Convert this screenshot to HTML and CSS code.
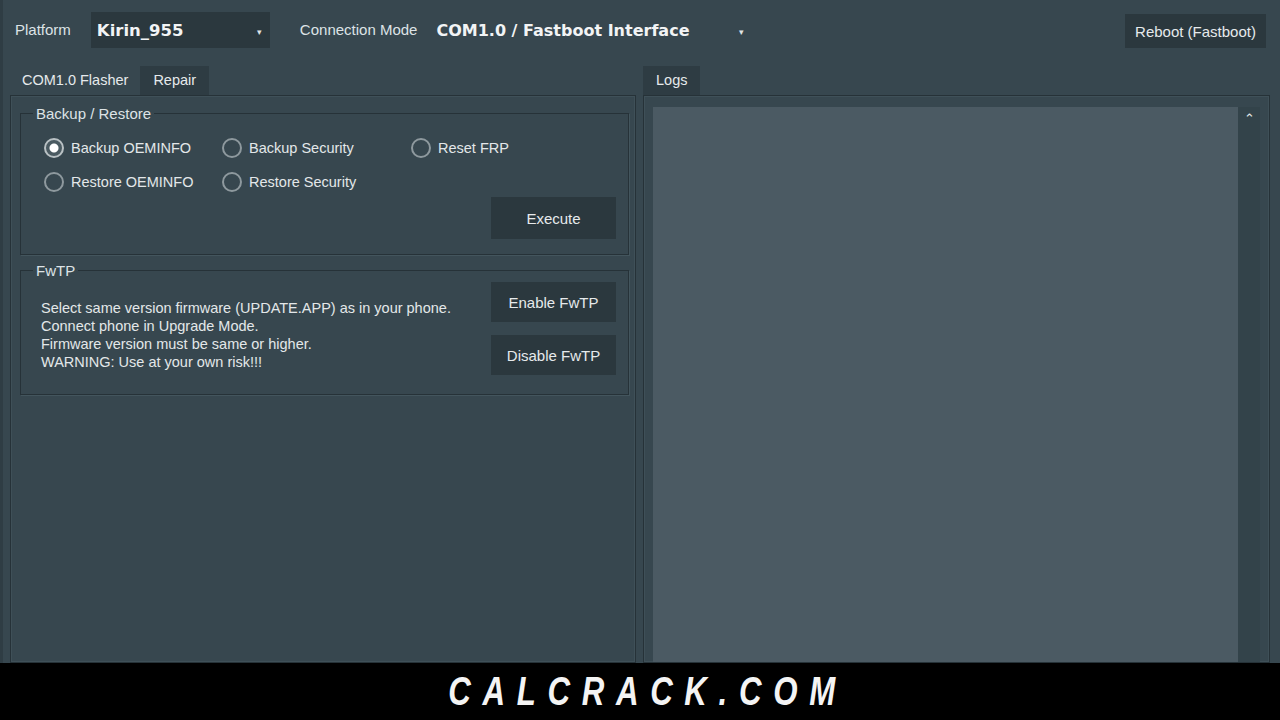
FILE: index.html
```html
<!DOCTYPE html>
<html lang="en">
  <head>
    <meta charset="UTF-8" />
    <meta name="viewport" content="width=device-width, initial-scale=1.0" />
    <title>Repair Tool</title>
    <link rel="stylesheet" href="styles.css">
  </head>
  <body>
    <div class="app">
      <div class="toolbar">
        <span class="label">Platform</span>
        <div class="combo combo-platform">
          <span class="combo-value">Kirin_955</span>
          <span class="caret">&#9662;</span>
        </div>
        <span class="label label-mode">Connection Mode</span>
        <div class="combo combo-mode">
          <span class="combo-value">COM1.0 / Fastboot Interface</span>
          <span class="caret">&#9662;</span>
        </div>
        <button class="btn btn-reboot">Reboot (Fastboot)</button>
      </div>

      <div class="main">
        <!-- left side: flasher / repair tabs -->
        <div class="side">
          <div class="tabs">
            <div class="tab">COM1.0 Flasher</div>
            <div class="tab active">Repair</div>
          </div>
          <div class="panel panel-left">
            <fieldset class="group group-backup">
              <legend>Backup / Restore</legend>
              <div class="radios">
                <label class="radio checked"><span class="dot"></span>Backup OEMINFO</label>
                <label class="radio"><span class="dot"></span>Backup Security</label>
                <label class="radio"><span class="dot"></span>Reset FRP</label>
                <label class="radio"><span class="dot"></span>Restore OEMINFO</label>
                <label class="radio"><span class="dot"></span>Restore Security</label>
              </div>
              <div class="actions">
                <button class="btn btn-action">Execute</button>
              </div>
            </fieldset>

            <fieldset class="group group-fwtp">
              <legend>FwTP</legend>
              <div class="fwtp-row">
                <p class="note">
                  Select same version firmware (UPDATE.APP) as in your phone.<br>
                  Connect phone in Upgrade Mode.<br>
                  Firmware version must be same or higher.<br>
                  WARNING: Use at your own risk!!!
                </p>
                <div class="fwtp-buttons">
                  <button class="btn btn-action">Enable FwTP</button>
                  <button class="btn btn-action">Disable FwTP</button>
                </div>
              </div>
            </fieldset>
          </div>
        </div>

        <!-- right side: log output -->
        <div class="side">
          <div class="tabs">
            <div class="tab active">Logs</div>
          </div>
          <div class="panel panel-right">
            <div class="log"></div>
            <div class="scrollbar">
              <span class="scroll-up">&#8963;</span>
            </div>
          </div>
        </div>
      </div>
    </div>

    <div class="banner">
      <span class="banner-text">CALCRACK.COM</span>
    </div>
  </body>
</html>
```

FILE: styles.css
```css
* {
  margin: 0;
  padding: 0;
  box-sizing: border-box;
}
body {
  width: 1280px;
  height: 720px;
  overflow: hidden;
  background: #37474f;
  color: #e6eaec;
  font-family: "Liberation Sans", Arial, sans-serif;
  font-size: 14px;
}
.app {
  height: 663px;
  display: flex;
  flex-direction: column;
  border-left: 3px solid #2f3d44;
}
.toolbar {
  height: 66px;
  display: flex;
  align-items: flex-start;
  padding: 12px 14px 0 12px;
}
.label {
  line-height: 36px;
  font-size: 15px;
  color: #dde3e6;
  margin-right: 20px;
}
.label-mode {
  margin-left: 30px;
  margin-right: 19px;
}
.combo {
  height: 36px;
  display: flex;
  align-items: center;
  justify-content: space-between;
  padding: 0 8px 0 6px;
}
.combo-platform {
  width: 179px;
  background: #2b383e;
}
.combo-mode {
  width: 316px;
  padding-left: 0;
}
.combo-value {
  font-family: "DejaVu Sans", sans-serif;
  font-weight: bold;
  font-size: 16px;
  color: #f2f4f5;
}
.combo-platform .combo-value {
  font-size: 16.5px;
}
.caret {
  font-size: 9px;
  color: #e0e4e6;
  margin-top: 4px;
}
.btn {
  border: none;
  background: #2b383e;
  color: #e6eaec;
  font-family: inherit;
  font-size: 15px;
}
.btn-reboot {
  margin-left: auto;
  width: 141px;
  height: 34px;
  margin-top: 2px;
}
.main {
  flex: 1;
  display: grid;
  grid-template-columns: 626px 627px;
  column-gap: 7px;
  padding-left: 7px;
}
.side {
  display: flex;
  flex-direction: column;
}
.tabs {
  display: flex;
  height: 29px;
}
.tab {
  line-height: 29px;
  padding: 0 12px;
  font-size: 14.5px;
  color: #e6eaec;
}
.tab.active {
  background: #2e3c43;
  padding: 0 13px;
}
.panel {
  flex: 1;
  border: 1px solid #263238;
  box-shadow: inset 0 0 0 1px #3f5058;
}
.panel-left {
  padding: 9px 6px 0 9px;
}
.group {
  border: 1px solid #263238;
  box-shadow: 1px 1px 0 #43555d;
  padding: 0 12px 0 0;
}
.group legend {
  margin-left: 12px;
  padding: 0 3px;
  font-size: 15px;
  color: #dde3e6;
}
.group-backup {
  height: 150px;
}
.radios {
  display: grid;
  grid-template-columns: 178px 189px auto;
  row-gap: 14px;
  padding: 16px 0 0 23px;
}
.radio {
  display: flex;
  align-items: center;
  height: 20px;
  font-size: 14.5px;
  color: #e3e7e9;
}
.dot {
  width: 20px;
  height: 20px;
  border-radius: 50%;
  border: 2px solid #8e999e;
  margin-right: 7px;
  flex-shrink: 0;
}
.radio.checked .dot {
  border-color: #b9c1c4;
  background: radial-gradient(circle, #ffffff 0 4px, #4a5a61 5px);
}
.actions {
  display: flex;
  justify-content: flex-end;
  padding-top: 5px;
}
.btn-action {
  width: 125px;
  height: 42px;
}
.group-fwtp {
  margin-top: 7px;
  height: 133px;
}
.fwtp-row {
  display: flex;
  justify-content: space-between;
  padding: 3px 0 0 20px;
}
.note {
  font-size: 14.5px;
  line-height: 18px;
  padding-top: 17px;
  color: #e3e7e9;
}
.fwtp-buttons {
  display: flex;
  flex-direction: column;
  gap: 13px;
}
.fwtp-buttons .btn-action {
  height: 40px;
}
.panel-right {
  display: flex;
  padding: 11px 9px 0 9px;
}
.log {
  flex: 1;
  background: #4b5a63;
}
.scrollbar {
  width: 22px;
  background: #33434a;
  display: flex;
  justify-content: center;
}
.scroll-up {
  font-size: 13px;
  line-height: 20px;
  color: #e6eaec;
  margin-top: 2px;
}
.banner {
  height: 57px;
  background: #000;
  display: flex;
  justify-content: center;
  align-items: center;
}
.banner-text {
  display: inline-block;
  font-family: "Liberation Sans", Arial, sans-serif;
  font-weight: bold;
  font-style: italic;
  font-size: 40px;
  letter-spacing: 15px;
  color: #f4f4f4;
  transform: scaleX(0.78);
  margin-right: -15px;
}
```
